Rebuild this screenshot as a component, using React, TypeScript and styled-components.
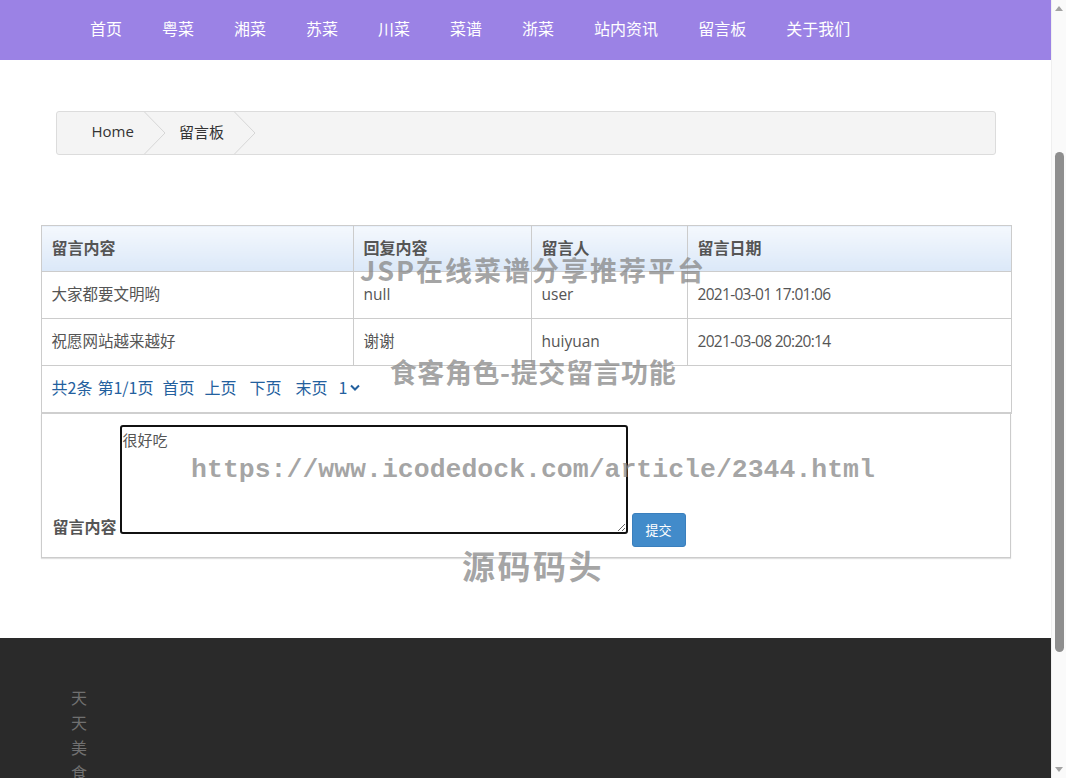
import React from 'react';
import styled, { createGlobalStyle } from 'styled-components';

const GlobalStyle = createGlobalStyle`
  html, body {
    margin: 0;
    padding: 0;
    background: #fff;
    font-family: "Open Sans", "Noto Sans CJK SC", sans-serif;
    color: #555;
    overflow: hidden;
  }
`;

const Shell = styled.div`
  position: relative;
  display: flex;
  height: 778px;
  overflow: hidden;
`;

const Viewport = styled.div`
  flex: 1;
  display: flex;
  flex-direction: column;
  min-width: 0;
`;

const ScrollTrack = styled.div`
  width: 15px;
  flex: none;
  background: #fafafa;
  border-left: 1px solid #efefef;
  box-sizing: border-box;
  display: flex;
  flex-direction: column;
  align-items: center;
  justify-content: space-between;
  padding: 6px 0;
`;

const ScrollThumb = styled.div`
  width: 9px;
  height: 500px;
  margin-top: 141px;
  margin-bottom: auto;
  border-radius: 5px;
  background: #8e8e8e;
`;

const NavBar = styled.nav`
  height: 60px;
  flex: none;
  background: #9b82e5;
`;

const NavList = styled.ul`
  list-style: none;
  margin: 0;
  padding: 0 0 0 70px;
  display: flex;
`;

const NavItem = styled.li`
  padding: 0 20px;
  line-height: 56px;
  font-size: 16px;
  color: #fff;
  font-family: "Noto Sans CJK SC", sans-serif;
`;

const Crumbs = styled.ol`
  list-style: none;
  width: 940px;
  box-sizing: border-box;
  height: 44px;
  margin: 51px auto 0;
  padding: 0 0 0 35px;
  display: flex;
  align-items: stretch;
  background: #f4f4f4;
  border: 1px solid #dcdcdc;
  border-radius: 3px;
`;

const Crumb = styled.li<{ $first?: boolean }>`
  display: flex;
  align-items: center;
  font-size: 15px;
  color: #333;
  padding-left: ${(p) => (p.$first ? '0' : '13px')};
  span {
    margin: 0 10px 4px 0;
  }
  svg {
    display: block;
  }
`;

const Board = styled.div`
  width: 970px;
  margin: 70px auto 0;
`;

const Table = styled.table`
  width: 100%;
  border-collapse: collapse;
  border: 1px solid #ccc;
  table-layout: fixed;
`;

const HeadCell = styled.th<{ $w: number }>`
  box-sizing: border-box;
  width: ${(p) => p.$w}px;
  height: 46px;
  padding: 0 10px 4px;
  text-align: left;
  font-size: 16px;
  font-weight: bold;
  color: #555;
  border: 1px solid #ccc;
  background: linear-gradient(#f4f8fd, #dbe8f8);
  font-family: "Noto Sans CJK SC", sans-serif;
`;

const Cell = styled.td<{ $tight?: boolean }>`
  box-sizing: border-box;
  height: 47px;
  padding: 0 10px 3px;
  font-size: 15.5px;
  color: #555;
  border: 1px solid #ccc;
  letter-spacing: ${(p) => (p.$tight ? '-0.7px' : '0')};
`;

const PagerCell = styled.td`
  box-sizing: border-box;
  height: 47px;
  padding: 0 10px 3px;
  border: 1px solid #ccc;
  border-bottom: 2px solid #cfcfcf;
  font-size: 16px;
  color: #23609e;
  font-family: "Noto Sans CJK SC", sans-serif;
`;

const Pager = styled.div`
  display: flex;
  align-items: center;
`;

const PageLink = styled.span<{ $gap: number }>`
  margin-left: ${(p) => p.$gap}px;
`;

const PageSelect = styled.span`
  margin-left: 11px;
  display: inline-flex;
  align-items: center;
  gap: 3px;
`;

const FormBox = styled.form`
  display: flex;
  align-items: flex-end;
  padding: 11px 0 10px 11px;
  border: 1px solid #ccc;
  border-top: none;
  box-shadow: 0 1px 1px rgba(0, 0, 0, 0.12);
`;

const Label = styled.label`
  width: 67px;
  font-size: 16px;
  font-weight: bold;
  color: #555;
  line-height: 22px;
  margin-bottom: 10px;
  font-family: "Noto Sans CJK SC", sans-serif;
`;

const TextBox = styled.textarea`
  width: 508px;
  height: 109px;
  box-sizing: border-box;
  margin: 0 4px 13px 0;
  padding: 2px 1px;
  border: 2px solid #111;
  border-radius: 3px;
  font-size: 15px;
  color: #555;
  font-family: "Noto Sans CJK SC", sans-serif;
  outline: none;
  resize: both;
`;

const SubmitButton = styled.button`
  width: 54px;
  height: 34px;
  padding: 0;
  border: 1px solid #3a7fbd;
  border-radius: 3px;
  background: #428bca;
  color: #fff;
  font-size: 13px;
  font-family: "Noto Sans CJK SC", sans-serif;
`;

const Footer = styled.footer`
  margin-top: 80px;
  flex: 1;
  background: #2a2a2a;
  padding: 47px 0 0 71px;
`;

const FooterBrand = styled.div`
  width: 16px;
  font-size: 16px;
  line-height: 25px;
  color: #707070;
  font-family: "Noto Sans CJK SC", sans-serif;
`;

const Mark = styled.div<{ $top: number; $size: number; $mono?: boolean; $spacing: number }>`
  position: absolute;
  left: 0;
  width: 1066px;
  top: ${(p) => p.$top}px;
  text-align: center;
  pointer-events: none;
  font-weight: bold;
  font-size: ${(p) => p.$size}px;
  letter-spacing: ${(p) => p.$spacing}px;
  line-height: 1;
  color: rgba(135, 135, 135, 0.75);
  font-family: ${(p) =>
    p.$mono ? '"Liberation Mono", "DejaVu Sans Mono", monospace' : '"Noto Sans CJK SC", sans-serif'};
`;

const navItems = ['首页', '粤菜', '湘菜', '苏菜', '川菜', '菜谱', '浙菜', '站内资讯', '留言板', '关于我们'];

const messages = [
  { content: '大家都要文明哟', reply: 'null', user: 'user', date: '2021-03-01 17:01:06' },
  { content: '祝愿网站越来越好', reply: '谢谢', user: 'huiyuan', date: '2021-03-08 20:20:14' },
];

const Chevron = () => (
  <svg width="22" height="42" viewBox="0 0 22 42">
    <polyline points="0.5,0 21,21 0.5,42" fill="none" stroke="#d6d6d6" strokeWidth="1" />
  </svg>
);

const Arrow = ({ up }: { up?: boolean }) => (
  <svg width="8" height="5" viewBox="0 0 8 5">
    <polygon points={up ? '0,5 4,0 8,5' : '0,0 4,5 8,0'} fill="#a3a3a3" />
  </svg>
);

const App = () => {
  return (
    <Shell>
      <GlobalStyle />
      <Viewport>
        <NavBar>
          <NavList>
            {navItems.map((n) => (
              <NavItem key={n}>{n}</NavItem>
            ))}
          </NavList>
        </NavBar>

        <Crumbs>
          <Crumb $first>
            <span>Home</span>
            <Chevron />
          </Crumb>
          <Crumb>
            <span>留言板</span>
            <Chevron />
          </Crumb>
        </Crumbs>

        <Board>
          <Table>
            <thead>
              <tr>
                <HeadCell $w={312}>留言内容</HeadCell>
                <HeadCell $w={178}>回复内容</HeadCell>
                <HeadCell $w={156}>留言人</HeadCell>
                <HeadCell $w={324}>留言日期</HeadCell>
              </tr>
            </thead>
            <tbody>
              {messages.map((m) => (
                <tr key={m.date}>
                  <Cell>{m.content}</Cell>
                  <Cell>{m.reply}</Cell>
                  <Cell>{m.user}</Cell>
                  <Cell $tight>{m.date}</Cell>
                </tr>
              ))}
              <tr>
                <PagerCell colSpan={4}>
                  <Pager>
                    <span>共2条</span>
                    <PageLink $gap={5}>第1/1页</PageLink>
                    <PageLink $gap={9}>首页</PageLink>
                    <PageLink $gap={10}>上页</PageLink>
                    <PageLink $gap={13}>下页</PageLink>
                    <PageLink $gap={14}>末页</PageLink>
                    <PageSelect>
                      1
                      <svg width="10" height="7" viewBox="0 0 10 7">
                        <polyline points="1,1.5 5,5.5 9,1.5" fill="none" stroke="#23609e" strokeWidth="2" />
                      </svg>
                    </PageSelect>
                  </Pager>
                </PagerCell>
              </tr>
            </tbody>
          </Table>
          <FormBox onSubmit={(e) => e.preventDefault()}>
            <Label>留言内容</Label>
            <TextBox defaultValue="很好吃" />
            <SubmitButton type="submit">提交</SubmitButton>
          </FormBox>
        </Board>

        <Footer>
          <FooterBrand>天天美食</FooterBrand>
        </Footer>
      </Viewport>

      <ScrollTrack>
        <Arrow up />
        <ScrollThumb />
        <Arrow />
      </ScrollTrack>

      <Mark $top={256} $size={27} $spacing={2}>
        JSP在线菜谱分享推荐平台
      </Mark>
      <Mark $top={358} $size={27} $spacing={0.6}>
        食客角色-提交留言功能
      </Mark>
      <Mark $top={457} $size={26.5} $spacing={0} $mono>
        https://www.icodedock.com/article/2344.html
      </Mark>
      <Mark $top={549} $size={33} $spacing={2.5}>
        源码码头
      </Mark>
    </Shell>
  );
};

export default App;
